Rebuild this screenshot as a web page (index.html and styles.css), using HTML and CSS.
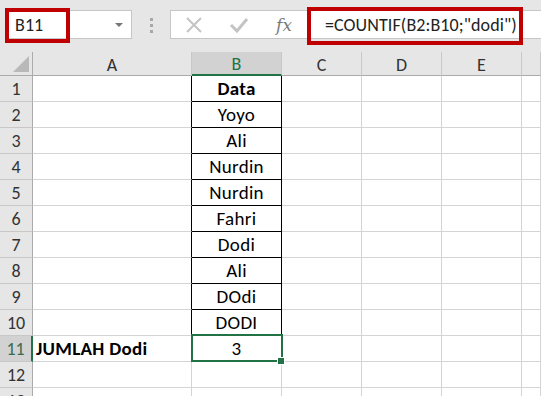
FILE: index.html
```html
<!DOCTYPE html>
<html lang="id">
<head>
    <meta charset="UTF-8">
    <title>COUNTIF</title>
    <link rel="stylesheet" href="styles.css">
</head>
<body>
    <div class="topbar">
        <div class="namebox">
            <span>B11</span>
            <span class="arrow"></span>
        </div>
        <div class="dots"><i></i><i></i><i></i></div>
        <div class="formulabox">
            <svg class="ico" width="20" height="20" viewBox="0 0 20 20"><path d="M3 3 L17 17 M17 3 L3 17" stroke="#c4c4c4" stroke-width="2" fill="none"/></svg>
            <svg class="ico" width="22" height="20" viewBox="0 0 22 20"><path d="M3 10 L9 16 L19 4" stroke="#c4c4c4" stroke-width="3" fill="none"/></svg>
            <span class="fx">fx</span>
            <span class="formula">=COUNTIF(B2:B10;"dodi")</span>
        </div>
        <div class="mark mark-name"></div>
        <div class="mark mark-formula"></div>
    </div>

    <div class="sheet">
        <div class="corner"><span></span></div>
        <div class="colhead">A</div>
        <div class="colhead sel">B</div>
        <div class="colhead">C</div>
        <div class="colhead">D</div>
        <div class="colhead">E</div>
        <div class="colhead"></div>

        <div class="rowhead">1</div><div class="cell edge"></div><div class="cell data bold">Data</div><div class="cell"></div><div class="cell"></div><div class="cell"></div><div class="cell"></div>
        <div class="rowhead">2</div><div class="cell edge"></div><div class="cell data">Yoyo</div><div class="cell"></div><div class="cell"></div><div class="cell"></div><div class="cell"></div>
        <div class="rowhead">3</div><div class="cell edge"></div><div class="cell data">Ali</div><div class="cell"></div><div class="cell"></div><div class="cell"></div><div class="cell"></div>
        <div class="rowhead">4</div><div class="cell edge"></div><div class="cell data">Nurdin</div><div class="cell"></div><div class="cell"></div><div class="cell"></div><div class="cell"></div>
        <div class="rowhead">5</div><div class="cell edge"></div><div class="cell data">Nurdin</div><div class="cell"></div><div class="cell"></div><div class="cell"></div><div class="cell"></div>
        <div class="rowhead">6</div><div class="cell edge"></div><div class="cell data">Fahri</div><div class="cell"></div><div class="cell"></div><div class="cell"></div><div class="cell"></div>
        <div class="rowhead">7</div><div class="cell edge"></div><div class="cell data">Dodi</div><div class="cell"></div><div class="cell"></div><div class="cell"></div><div class="cell"></div>
        <div class="rowhead">8</div><div class="cell edge"></div><div class="cell data">Ali</div><div class="cell"></div><div class="cell"></div><div class="cell"></div><div class="cell"></div>
        <div class="rowhead">9</div><div class="cell edge"></div><div class="cell data">DOdi</div><div class="cell"></div><div class="cell"></div><div class="cell"></div><div class="cell"></div>
        <div class="rowhead">10</div><div class="cell edge"></div><div class="cell data">DODI</div><div class="cell"></div><div class="cell"></div><div class="cell"></div><div class="cell"></div>
        <div class="rowhead sel">11</div><div class="cell left bold">JUMLAH Dodi</div><div class="cell active">3</div><div class="cell"></div><div class="cell"></div><div class="cell"></div><div class="cell"></div>
        <div class="rowhead">12</div><div class="cell"></div><div class="cell"></div><div class="cell"></div><div class="cell"></div><div class="cell"></div><div class="cell"></div>
        <div class="rowhead">13</div><div class="cell"></div><div class="cell"></div><div class="cell"></div><div class="cell"></div><div class="cell"></div><div class="cell"></div>
    </div>
</body>
</html>
```

FILE: styles.css
```css
body {
    margin: 0;
    background: #ffffff;
    font-family: 'Carlito', 'Lato', sans-serif;
    font-size: 19px;
    letter-spacing: 0.3px;
    color: #000;
    overflow: hidden;
}

.topbar {
    position: relative;
    height: 52px;
    background: #e6e6e6;
    display: flex;
    align-items: flex-start;
    padding-top: 10px;
    box-sizing: border-box;
    font-size: 18px;
    letter-spacing: 0.1px;
}

.namebox {
    margin-left: 5px;
    width: 127px;
    height: 29px;
    background: #fff;
    border: 1px solid #c6c6c6;
    box-sizing: border-box;
    display: flex;
    align-items: center;
    justify-content: space-between;
    padding: 0 8px 0 9px;
    color: #222;
}

.arrow {
    width: 0;
    height: 0;
    border-left: 4px solid transparent;
    border-right: 4px solid transparent;
    border-top: 4px solid #777;
}

.dots {
    width: 38px;
    display: flex;
    flex-direction: column;
    align-items: center;
    gap: 3px;
    padding-top: 8px;
}

.dots i {
    width: 3px;
    height: 3px;
    background: #a8a8a8;
}

.formulabox {
    flex: 1;
    height: 29px;
    background: #fff;
    border: 1px solid #c6c6c6;
    border-right: none;
    box-sizing: border-box;
    display: flex;
    align-items: center;
    padding-left: 13px;
}

.ico {
    display: block;
    margin-right: 24px;
}

.fx {
    font-family: 'DejaVu Serif', 'Liberation Serif', serif;
    font-style: italic;
    font-size: 17px;
    color: #7a7a7a;
    margin-left: 2px;
    width: 48px;
}

.formula {
    color: #222;
    margin-left: 1px;
}

.mark {
    position: absolute;
    border: 4px solid #c00000;
    box-sizing: border-box;
}

.mark-name {
    left: 5px;
    top: 8px;
    width: 65px;
    height: 35px;
}

.mark-formula {
    left: 307px;
    top: 7px;
    width: 216px;
    height: 38px;
}

.sheet {
    display: grid;
    grid-template-columns: 33px 159px 90px 80px 80px 80px 1fr;
    grid-template-rows: 24px repeat(13, 26px);
}

.corner {
    background: #e6e6e6;
    border-right: 1px solid #ababab;
    border-bottom: 1px solid #ababab;
    position: relative;
}

.corner span {
    position: absolute;
    right: 3px;
    bottom: 3px;
    width: 0;
    height: 0;
    border-left: 16px solid transparent;
    border-bottom: 16px solid #b9b9b9;
}

.colhead {
    background: #e6e6e6;
    border-right: 1px solid #c8c8c8;
    border-bottom: 1px solid #ababab;
    display: flex;
    align-items: center;
    justify-content: center;
    color: #333;
    padding-top: 2px;
    font-size: 18px;
    letter-spacing: 0;
}

.colhead.sel {
    background: #d2d2d2;
    color: #217346;
    border-bottom: 2px solid #217346;
}

.rowhead {
    background: #e6e6e6;
    border-right: 1px solid #ababab;
    border-bottom: 1px solid #c8c8c8;
    display: flex;
    align-items: center;
    justify-content: center;
    color: #333;
    font-size: 18px;
    letter-spacing: 0;
}

.rowhead.sel {
    background: #d2d2d2;
    color: #3b6b4d;
    border-right: 2px solid #217346;
}

.cell {
    border-right: 1px solid #d4d4d4;
    border-bottom: 1px solid #d4d4d4;
    display: flex;
    align-items: center;
    justify-content: center;
    white-space: nowrap;
}

.cell.edge {
    border-right-color: #000;
}

.cell.data {
    border-right-color: #000;
    border-bottom-color: #000;
}

.cell.left {
    justify-content: flex-start;
    padding-left: 3px;
}

.bold {
    font-weight: bold;
}

.cell.active {
    position: relative;
}

.cell.active::before {
    content: "";
    position: absolute;
    left: -1px;
    top: -2px;
    right: -2px;
    bottom: -1px;
    border: 2px solid #217346;
}

.cell.active::after {
    content: "";
    position: absolute;
    right: -4px;
    bottom: -4px;
    width: 6px;
    height: 6px;
    background: #217346;
    border: 1px solid #fff;
}
```
